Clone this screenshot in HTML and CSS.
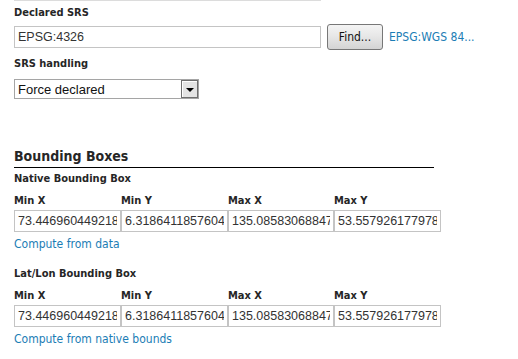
FILE: index.html
```html
<!DOCTYPE html>
<html lang="en">
<head>
    <meta charset="UTF-8">
    <title>Layer data</title>
    <link rel="stylesheet" href="styles.css">
</head>
<body>
<div class="panel">
    <div class="top-rule"></div>

    <div class="field">
        <label class="label">Declared SRS</label>
        <div class="srs-row">
            <input type="text" class="text-input srs-input" value="EPSG:4326">
            <button class="find-btn">Find...</button>
            <a href="#" class="link">EPSG:WGS 84...</a>
        </div>
    </div>

    <div class="field">
        <label class="label">SRS handling</label>
        <div class="fake-select">
            <span class="select-text">Force declared</span>
            <span class="select-arrow"><span class="tri"></span></span>
        </div>
    </div>

    <h2 class="section-title">Bounding Boxes</h2>

    <div class="bbox">
        <label class="label">Native Bounding Box</label>
        <div class="bbox-grid">
            <span class="col-label">Min X</span>
            <span class="col-label">Min Y</span>
            <span class="col-label">Max X</span>
            <span class="col-label">Max Y</span>
            <input type="text" class="text-input" value="73.44696044921875">
            <input type="text" class="text-input" value="6.318641185760498">
            <input type="text" class="text-input" value="135.08583068847656">
            <input type="text" class="text-input" value="53.557926177978516">
        </div>
        <a href="#" class="link compute">Compute from data</a>
    </div>

    <div class="bbox">
        <label class="label">Lat/Lon Bounding Box</label>
        <div class="bbox-grid">
            <span class="col-label">Min X</span>
            <span class="col-label">Min Y</span>
            <span class="col-label">Max X</span>
            <span class="col-label">Max Y</span>
            <input type="text" class="text-input" value="73.44696044921875">
            <input type="text" class="text-input" value="6.318641185760498">
            <input type="text" class="text-input" value="135.08583068847656">
            <input type="text" class="text-input" value="53.557926177978516">
        </div>
        <a href="#" class="link compute">Compute from native bounds</a>
    </div>
</div>
</body>
</html>
```

FILE: styles.css
```css
html, body {
    margin: 0;
    padding: 0;
    background: #fff;
}

body {
    font-family: "DejaVu Sans Condensed", "DejaVu Sans", sans-serif;
    color: #2e2e2e;
    font-size: 11px;
}

.panel {
    padding-left: 14px;
    display: flex;
    flex-direction: column;
}

.top-rule {
    width: 307px;
    border-top: 1px solid #dcdcdc;
}

.label {
    display: block;
    font-weight: bold;
    font-size: 11px;
    line-height: 14px;
    color: #262626;
}

.field .label {
    margin-top: 5px;
    margin-bottom: 4px;
}

.field + .field .label {
    margin-top: 7px;
    margin-bottom: 8px;
}

.srs-row {
    display: flex;
    align-items: center;
}

.text-input {
    box-sizing: border-box;
    font-family: "Liberation Sans", Arial, sans-serif;
    font-size: 12.5px;
    color: #333;
    border: 1px solid #c4c4c4;
    padding: 0 3px;
    margin: 0;
    background: #fff;
    outline: none;
}

.srs-input {
    width: 307px;
    height: 22px;
}

.find-btn {
    margin-left: 6px;
    height: 26px;
    width: 56px;
    font-family: "DejaVu Sans Condensed", "DejaVu Sans", sans-serif;
    font-size: 12px;
    color: #111;
    border: 1px solid #777;
    border-radius: 3px;
    background: linear-gradient(#f4f4f4, #e6e6e6 50%, #d4d4d4);
    padding: 0;
}

.link {
    color: #1b7db5;
    text-decoration: none;
    font-size: 12px;
}

.srs-row .link {
    margin-left: 6px;
}

.fake-select {
    box-sizing: border-box;
    width: 185px;
    height: 20px;
    border: 1px solid #a5a5a5;
    display: flex;
    align-items: center;
    justify-content: space-between;
    font-family: "Liberation Sans", Arial, sans-serif;
    font-size: 13px;
    color: #111;
    padding-left: 3px;
}

.select-arrow {
    box-sizing: border-box;
    width: 17px;
    height: 18px;
    border: 1px solid #6f6f6f;
    box-shadow: inset 1px 1px 0 #fff;
    background: #e4e4e4;
    display: flex;
    align-items: center;
    justify-content: center;
}

.tri {
    width: 0;
    height: 0;
    border-left: 4px solid transparent;
    border-right: 4px solid transparent;
    border-top: 4px solid #000;
    margin-top: 1px;
}

.section-title {
    width: 420px;
    margin: 48px 0 0;
    font-size: 14px;
    line-height: 18px;
    font-weight: bold;
    color: #262626;
    border-bottom: 1px solid #000;
    padding-bottom: 2px;
}

.bbox .label {
    margin-top: 4px;
    margin-bottom: 9px;
}

.bbox + .bbox {
    margin-top: 12px;
}

.bbox-grid {
    display: grid;
    grid-template-columns: 107px 107px 106px 107px;
    width: 427px;
}

.col-label {
    font-weight: bold;
    font-size: 11px;
    line-height: 12px;
    margin-bottom: 3px;
    color: #262626;
}

.bbox-grid .text-input {
    width: 100%;
    height: 22px;
}

.compute {
    display: block;
    margin-top: 5px;
    line-height: 14px;
}
```
